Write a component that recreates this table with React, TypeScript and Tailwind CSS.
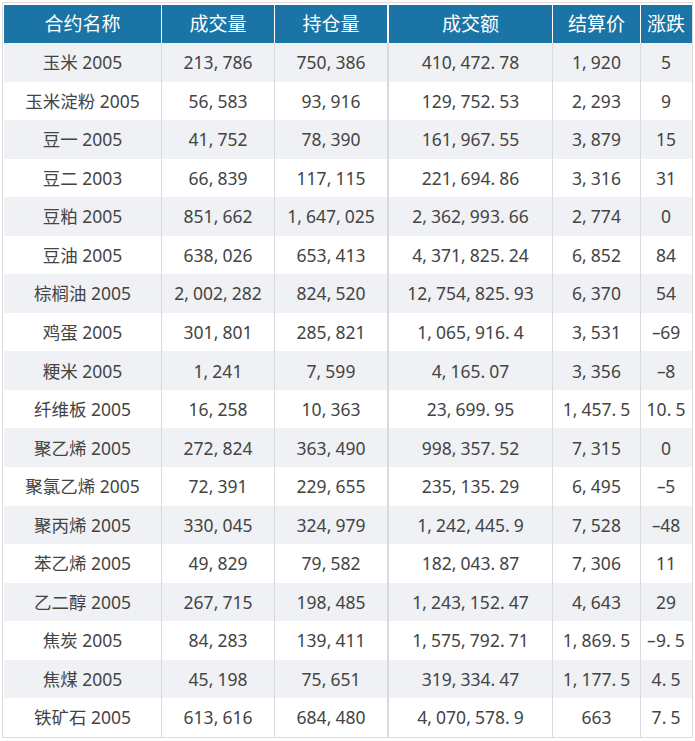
import React from "react";

const headers = ["合约名称", "成交量", "持仓量", "成交额", "结算价", "涨跌"];

const rows: string[][] = [
  ["玉米 2005", "213,786", "750,386", "410,472.78", "1,920", "5"],
  ["玉米淀粉 2005", "56,583", "93,916", "129,752.53", "2,293", "9"],
  ["豆一 2005", "41,752", "78,390", "161,967.55", "3,879", "15"],
  ["豆二 2003", "66,839", "117,115", "221,694.86", "3,316", "31"],
  ["豆粕 2005", "851,662", "1,647,025", "2,362,993.66", "2,774", "0"],
  ["豆油 2005", "638,026", "653,413", "4,371,825.24", "6,852", "84"],
  ["棕榈油 2005", "2,002,282", "824,520", "12,754,825.93", "6,370", "54"],
  ["鸡蛋 2005", "301,801", "285,821", "1,065,916.4", "3,531", "-69"],
  ["粳米 2005", "1,241", "7,599", "4,165.07", "3,356", "-8"],
  ["纤维板 2005", "16,258", "10,363", "23,699.95", "1,457.5", "10.5"],
  ["聚乙烯 2005", "272,824", "363,490", "998,357.52", "7,315", "0"],
  ["聚氯乙烯 2005", "72,391", "229,655", "235,135.29", "6,495", "-5"],
  ["聚丙烯 2005", "330,045", "324,979", "1,242,445.9", "7,528", "-48"],
  ["苯乙烯 2005", "49,829", "79,582", "182,043.87", "7,306", "11"],
  ["乙二醇 2005", "267,715", "198,485", "1,243,152.47", "4,643", "29"],
  ["焦炭 2005", "84,283", "139,411", "1,575,792.71", "1,869.5", "-9.5"],
  ["焦煤 2005", "45,198", "75,651", "319,334.47", "1,177.5", "4.5"],
  ["铁矿石 2005", "613,616", "684,480", "4,070,578.9", "663", "7.5"],
];

const widths = ["w-[157px]", "w-[113px]", "w-[113px]", "w-[165px]", "w-[88px]", "w-[51px]"];

// commas and points take a half-width box, like the source font
function Num({ v }: { v: string }) {
  const parts = v.split(/([,.\-])/);
  return (
    <span>
      {parts.map((p, i) => {
        if (p === "," || p === ".")
          return (
            <span key={i} className="inline-block w-[0.5em] text-left">
              {p}
            </span>
          );
        if (p === "-")
          return (
            <span key={i} className="inline-block w-[0.5em] text-center scale-x-[1.7]">
              {p}
            </span>
          );
        return <span key={i}>{p}</span>;
      })}
    </span>
  );
}

function sep(i: number, head: boolean) {
  if (i === 0) return "";
  const w = i === 3 ? "border-l-2" : "border-l";
  return `${w} ${head ? "border-white" : "border-[#d9dadc]"}`;
}

export default function App() {
  return (
    <div
      className="w-[695px] h-[741px] bg-white pt-[2px] pl-[2px]"
      style={{ fontFamily: '"Noto Sans", "Noto Sans CJK SC", sans-serif' }}
    >
      <div className="w-[691px] border border-[#dcdcdc] pt-[2px] pl-[1px]">
        <div className="flex h-[38px] bg-[#1a74a5] text-white text-[19px]">
          {headers.map((h, i) => (
            <div
              key={h}
              className={`${widths[i]} ${sep(i, true)} flex items-center justify-center`}
            >
              {h}
            </div>
          ))}
        </div>
        {rows.map((r, ri) => (
          <div
            key={ri}
            className={`flex h-[38.55px] text-[17.5px] text-[#444] ${
              ri % 2 === 0 ? "bg-[#f0f1f4]" : "bg-white"
            }`}
          >
            {r.map((c, i) => (
              <div
                key={i}
                className={`${widths[i]} ${sep(i, false)} flex items-center justify-center whitespace-nowrap`}
              >
                {i === 0 ? c : <Num v={c} />}
              </div>
            ))}
          </div>
        ))}
      </div>
    </div>
  );
}
